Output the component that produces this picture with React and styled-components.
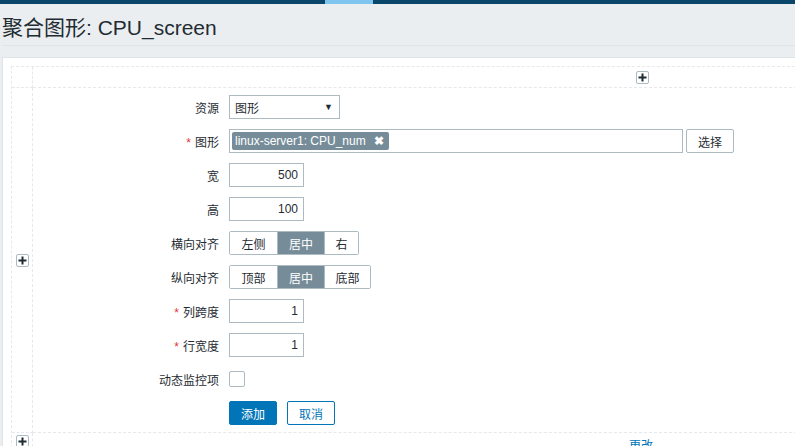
import React, { useState } from 'react';
import styled, { createGlobalStyle } from 'styled-components';

const GlobalStyle = createGlobalStyle`
  html, body {
    margin: 0;
    padding: 0;
    background: #ebeef0;
    overflow: hidden;
  }
  body {
    font-family: "Liberation Sans", Arial, "Noto Sans CJK SC", sans-serif;
    font-size: 12px;
    color: #1f2c33;
  }
`;

const TopBar = styled.div`
  display: flex;
  height: 4px;
  background: #0a466a;
`;

const TopSpacer = styled.div`
  width: ${({ w }) => w}px;
`;

const TopActive = styled.div`
  width: 48px;
  background: #7ec5f0;
`;

const Header = styled.header`
  display: flex;
  align-items: center;
  height: 41px;
  margin: 0 0 0 2px;
  border-bottom: 1px solid #dfe4e7;
`;

const Title = styled.h1`
  margin: 0;
  font-size: 21px;
  font-weight: normal;
  color: #1f2c33;
  line-height: 24px;
  padding-top: 6px;
`;

const Panel = styled.div`
  margin: 11px 0 0 2px;
  background: #fff;
  border: 1px solid #dfe4e7;
  border-right: none;
  padding: 8px 0 0 8px;
  height: 400px;
  overflow: hidden;
`;

const Grid = styled.div`
  display: grid;
  grid-template-columns: 21px 1300px;
  grid-template-rows: 21px 345px 30px;
  border-top: 1px dashed #e5e9eb;
  border-left: 1px dashed #e5e9eb;
`;

const Cell = styled.div`
  border-right: 1px dashed #e5e9eb;
  border-bottom: 1px dashed #e5e9eb;
  display: flex;
  align-items: ${({ align }) => align || 'center'};
  justify-content: ${({ justify }) => justify || 'center'};
  padding: ${({ pad }) => pad || '0'};
  box-sizing: border-box;
`;

const PlusButton = styled.button`
  width: 13px;
  height: 13px;
  padding: 0;
  border: 1px solid #acbbc2;
  border-radius: 2px;
  background: #fff;
  display: flex;
  align-items: center;
  justify-content: center;
  cursor: pointer;
`;

const LinkText = styled.a`
  color: #0275b8;
  font-size: 12px;
  text-decoration: none;
`;

const Form = styled.div`
  display: grid;
  grid-template-columns: 186px auto;
  column-gap: 10px;
  row-gap: 10px;
  align-items: center;
  grid-auto-rows: 24px;
`;

const Label = styled.label`
  text-align: right;
  font-size: 12px;
  color: #1f2c33;
  white-space: nowrap;
`;

const Star = styled.span`
  color: #e33734;
  margin-right: 4px;
`;

const Field = styled.div`
  display: flex;
  align-items: center;
  gap: 3px;
`;

const TextInput = styled.input`
  box-sizing: border-box;
  width: 75px;
  height: 24px;
  border: 1px solid #acbbc2;
  padding: 0 5px;
  font-family: inherit;
  font-size: 12px;
  color: #1f2c33;
  text-align: right;
  outline: none;
`;

const Select = styled.div`
  box-sizing: border-box;
  width: 111px;
  height: 24px;
  border: 1px solid #acbbc2;
  display: flex;
  align-items: center;
  justify-content: space-between;
  padding: 0 6px 0 5px;
  font-size: 12px;
`;

const Arrow = styled.span`
  font-size: 9px;
  color: #1f2c33;
`;

const MultiSelect = styled.div`
  box-sizing: border-box;
  width: 454px;
  height: 24px;
  border: 1px solid #acbbc2;
  display: flex;
  align-items: center;
  padding: 0 2px;
`;

const Tag = styled.span`
  display: inline-flex;
  align-items: center;
  gap: 8px;
  height: 18px;
  padding: 0 5px 0 3px;
  background: #768d99;
  color: #fff;
  border-radius: 2px;
  font-size: 12px;
`;

const TagClose = styled.span`
  font-size: 12px;
  font-weight: bold;
  line-height: 1;
`;

const PlainButton = styled.button`
  box-sizing: border-box;
  height: 24px;
  width: 48px;
  border: 1px solid #acbbc2;
  border-radius: 2px;
  background: #fff;
  font-family: inherit;
  font-size: 12px;
  color: #1f2c33;
  padding: 0;
`;

const Segmented = styled.div`
  display: flex;
  border: 1px solid #acbbc2;
  border-radius: 2px;
  height: 24px;
  box-sizing: border-box;
  overflow: hidden;
`;

const Segment = styled.button`
  border: none;
  border-left: ${({ first }) => (first ? 'none' : '1px solid #acbbc2')};
  background: ${({ active }) => (active ? '#768d99' : '#fff')};
  color: ${({ active }) => (active ? '#fff' : '#1f2c33')};
  font-family: inherit;
  font-size: 12px;
  width: ${({ w }) => w}px;
  padding: 0;
  cursor: pointer;
`;

const Checkbox = styled.span`
  display: block;
  width: 16px;
  height: 16px;
  box-sizing: border-box;
  border: 1px solid #acbbc2;
  border-radius: 2px;
  background: #fff;
`;

const Buttons = styled.div`
  display: flex;
  gap: 10px;
`;

const ActionButton = styled.button`
  box-sizing: border-box;
  width: 48px;
  height: 24px;
  border: 1px solid #0275b8;
  border-radius: 2px;
  background: ${({ primary }) => (primary ? '#0275b8' : '#fff')};
  color: ${({ primary }) => (primary ? '#fff' : '#0275b8')};
  font-family: inherit;
  font-size: 12px;
  padding: 0;
`;

function PlusIcon() {
  return (
    <svg width="9" height="9" viewBox="0 0 9 9">
      <path d="M3.5 0.5h2v3h3v2h-3v3h-2v-3h-3v-2h3z" fill="#1f2c33" />
    </svg>
  );
}

function SegmentGroup({ items, value, onChange }) {
  return (
    <Segmented>
      {items.map((it, i) => (
        <Segment
          key={it.label}
          first={i === 0}
          w={it.w}
          active={value === i}
          onClick={() => onChange(i)}
        >
          {it.label}
        </Segment>
      ))}
    </Segmented>
  );
}

export default function App() {
  const [halign, setHalign] = useState(1);
  const [valign, setValign] = useState(1);

  return (
    <>
      <GlobalStyle />
      <TopBar>
        <TopSpacer w={325} />
        <TopActive />
      </TopBar>
      <Header>
        <Title>聚合图形: CPU_screen</Title>
      </Header>
      <Panel>
        <Grid>
          <Cell />
          <Cell justify="flex-start" pad="0 0 0 603px">
            <PlusButton><PlusIcon /></PlusButton>
          </Cell>

          <Cell>
            <PlusButton><PlusIcon /></PlusButton>
          </Cell>
          <Cell justify="flex-start" align="flex-start" pad="7px 0 0 0">
            <Form>
              <Label>资源</Label>
              <Field>
                <Select>
                  <span>图形</span>
                  <Arrow>▼</Arrow>
                </Select>
              </Field>

              <Label><Star>*</Star>图形</Label>
              <Field>
                <MultiSelect>
                  <Tag>
                    linux-server1: CPU_num
                    <TagClose>✖</TagClose>
                  </Tag>
                </MultiSelect>
                <PlainButton>选择</PlainButton>
              </Field>

              <Label>宽</Label>
              <Field><TextInput defaultValue="500" /></Field>

              <Label>高</Label>
              <Field><TextInput defaultValue="100" /></Field>

              <Label>横向对齐</Label>
              <Field>
                <SegmentGroup
                  items={[{ label: '左侧', w: 47 }, { label: '居中', w: 47 }, { label: '右', w: 34 }]}
                  value={halign}
                  onChange={setHalign}
                />
              </Field>

              <Label>纵向对齐</Label>
              <Field>
                <SegmentGroup
                  items={[{ label: '顶部', w: 47 }, { label: '居中', w: 47 }, { label: '底部', w: 46 }]}
                  value={valign}
                  onChange={setValign}
                />
              </Field>

              <Label><Star>*</Star>列跨度</Label>
              <Field><TextInput defaultValue="1" /></Field>

              <Label><Star>*</Star>行宽度</Label>
              <Field><TextInput defaultValue="1" /></Field>

              <Label>动态监控项</Label>
              <Field><Checkbox /></Field>

              <span />
              <Buttons>
                <ActionButton primary>添加</ActionButton>
                <ActionButton>取消</ActionButton>
              </Buttons>
            </Form>
          </Cell>

          <Cell align="flex-start" pad="2px 0 0 0">
            <PlusButton><PlusIcon /></PlusButton>
          </Cell>
          <Cell justify="flex-start" align="flex-start" pad="3px 0 0 596px">
            <LinkText href="#">更改</LinkText>
          </Cell>
        </Grid>
      </Panel>
    </>
  );
}
